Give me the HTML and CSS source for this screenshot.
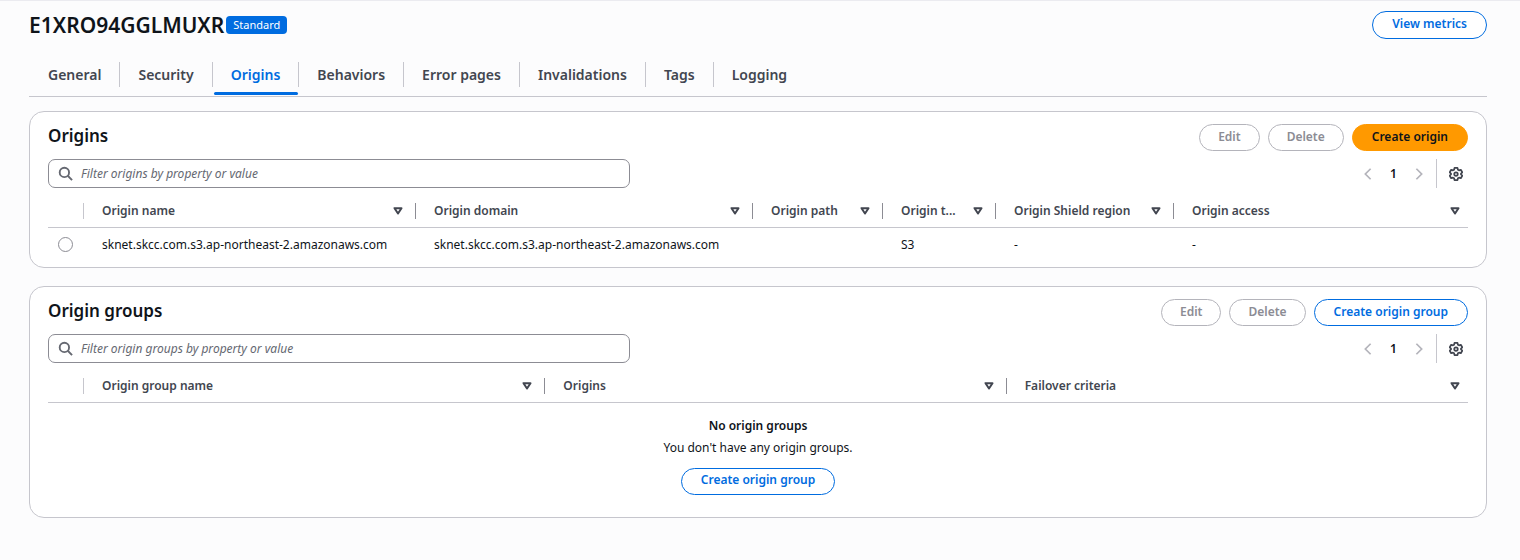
FILE: index.html
```html
<!DOCTYPE html>
<html lang="en">
<head>
<meta charset="utf-8">
<meta name="viewport" content="width=device-width, initial-scale=1">
<title>E1XRO94GGLMUXR</title>
<link rel="stylesheet" href="styles.css">
</head>
<body>
<svg class="sprite" aria-hidden="true">
  <symbol id="search" viewBox="0 0 16 16"><circle cx="6.8" cy="6.8" r="5"/><path d="M10.4 10.4 15 15"/></symbol>
  <symbol id="prev" viewBox="0 0 16 16"><path d="M11 2 5 8l6 6"/></symbol>
  <symbol id="next" viewBox="0 0 16 16"><path d="m5 2 6 6-6 6"/></symbol>
  <symbol id="gear" viewBox="0 0 16 16"><path d="M6.300 1h3.400l.5 2.100 1.200.7 2.100-.6 1.700 2.900L13.700 7.500v1l1.500 1.400-1.700 2.900-2.100-.6-1.200.7-.5 2.100H6.300l-.5-2.100-1.200-.7-2.100.6L.8 9.900l1.500-1.400v-1L.8 6.100l1.700-2.900 2.100.6 1.200-.7z"/><circle cx="8" cy="8" r="2"/></symbol>
  <symbol id="sort" viewBox="0 0 10 8"><path d="M1.500 1.200h7L5 6.500z"/></symbol>
</svg>

<main class="page">
  <header class="page-header">
    <h1>E1XRO94GGLMUXR</h1>
    <span class="badge">Standard</span>
    <button class="btn page-action" type="button">View metrics</button>
  </header>

  <nav class="tabs">
    <a href="#general">General</a>
    <a href="#security">Security</a>
    <a href="#origins" class="active" aria-current="page">Origins</a>
    <a href="#behaviors">Behaviors</a>
    <a href="#errors">Error pages</a>
    <a href="#invalidations">Invalidations</a>
    <a href="#tags">Tags</a>
    <a href="#logging">Logging</a>
  </nav>

  <section class="card">
    <div class="card-header">
      <h2>Origins</h2>
      <div class="actions">
        <button class="btn" type="button" disabled>Edit</button>
        <button class="btn" type="button" disabled>Delete</button>
        <button class="btn primary" type="button">Create origin</button>
      </div>
    </div>
    <div class="tools">
      <label class="filter">
        <svg class="icon"><use href="#search"/></svg>
        <input type="text" aria-label="Filter origins" placeholder="Filter origins by property or value">
      </label>
      <div class="pager">
        <button class="icon-btn" type="button" aria-label="Previous page" disabled><svg class="icon"><use href="#prev"/></svg></button>
        <button class="page-number" type="button">1</button>
        <button class="icon-btn" type="button" aria-label="Next page" disabled><svg class="icon"><use href="#next"/></svg></button>
        <span class="divider"></span>
        <button class="icon-btn" type="button" aria-label="Preferences"><svg class="icon gear"><use href="#gear"/></svg></button>
      </div>
    </div>
    <table>
      <colgroup><col class="c-select"><col class="c-name"><col class="c-domain"><col class="c-path"><col class="c-type"><col class="c-shield"><col></colgroup>
      <thead>
        <tr>
          <th class="select"></th>
          <th><button class="sort" type="button"><span>Origin name</span><svg><use href="#sort"/></svg></button></th>
          <th><button class="sort" type="button"><span>Origin domain</span><svg><use href="#sort"/></svg></button></th>
          <th><button class="sort" type="button"><span>Origin path</span><svg><use href="#sort"/></svg></button></th>
          <th><button class="sort" type="button"><span>Origin t...</span><svg><use href="#sort"/></svg></button></th>
          <th><button class="sort" type="button"><span>Origin Shield region</span><svg><use href="#sort"/></svg></button></th>
          <th><button class="sort" type="button"><span>Origin access</span><svg><use href="#sort"/></svg></button></th>
        </tr>
      </thead>
      <tbody>
        <tr>
          <td class="select"><input type="radio" name="origin" aria-label="Select origin"></td>
          <td>sknet.skcc.com.s3.ap-northeast-2.amazonaws.com</td>
          <td>sknet.skcc.com.s3.ap-northeast-2.amazonaws.com</td>
          <td></td>
          <td>S3</td>
          <td>-</td>
          <td>-</td>
        </tr>
      </tbody>
    </table>
  </section>

  <section class="card">
    <div class="card-header">
      <h2>Origin groups</h2>
      <div class="actions">
        <button class="btn" type="button" disabled>Edit</button>
        <button class="btn" type="button" disabled>Delete</button>
        <button class="btn" type="button">Create origin group</button>
      </div>
    </div>
    <div class="tools">
      <label class="filter">
        <svg class="icon"><use href="#search"/></svg>
        <input type="text" aria-label="Filter origin groups" placeholder="Filter origin groups by property or value">
      </label>
      <div class="pager">
        <button class="icon-btn" type="button" aria-label="Previous page" disabled><svg class="icon"><use href="#prev"/></svg></button>
        <button class="page-number" type="button">1</button>
        <button class="icon-btn" type="button" aria-label="Next page" disabled><svg class="icon"><use href="#next"/></svg></button>
        <span class="divider"></span>
        <button class="icon-btn" type="button" aria-label="Preferences"><svg class="icon gear"><use href="#gear"/></svg></button>
      </div>
    </div>
    <table>
      <colgroup><col class="c-select"><col><col><col></colgroup>
      <thead>
        <tr>
          <th class="select"></th>
          <th><button class="sort" type="button"><span>Origin group name</span><svg><use href="#sort"/></svg></button></th>
          <th><button class="sort" type="button"><span>Origins</span><svg><use href="#sort"/></svg></button></th>
          <th><button class="sort" type="button"><span>Failover criteria</span><svg><use href="#sort"/></svg></button></th>
        </tr>
      </thead>
    </table>
    <div class="empty">
      <strong>No origin groups</strong>
      <p>You don't have any origin groups.</p>
      <button class="btn" type="button">Create origin group</button>
    </div>
  </section>
</main>
</body>
</html>
```

FILE: styles.css
```css
* { box-sizing: border-box; }

body {
  margin: 0;
  background: #fcfcfd;
  color: #0f141a;
  font: 12px/20px "Noto Sans", "Open Sans", sans-serif;
}

button, input { font: inherit; color: inherit; }
button { margin: 0; padding: 0; border: 0; background: none; }
h1, h2, p { margin: 0; }
.sprite { display: none; }

.page {
  border-top: 1px solid #ebebf0;
  padding: 10px 33px 42px 29px;
}

.page-header { display: flex; align-items: center; gap: 2px; }
h1 { font-size: 21px; line-height: 28px; font-weight: 600; }

.badge {
  padding: 0 7px;
  border-radius: 4px;
  background: #006ce0;
  color: #fff;
  font-size: 11px;
  line-height: 18px;
}

.btn {
  height: 27px;
  padding: 0 19px 2px;
  border: 1px solid #006ce0;
  border-radius: 14px;
  background: #fff;
  color: #006ce0;
  font-weight: 600;
  white-space: nowrap;
}
.btn:disabled { padding: 0 18px 2px; border-color: #b4b4bb; color: #8c8c94; }
.btn.primary { border-color: #ff9900; background: #ff9900; color: #0f141a; }
.page-action { height: 28px; margin-left: auto; }

.tabs {
  display: flex;
  margin-top: 12px;
  padding: 11px 0 0 1px;
  border-bottom: 1px solid #c6c6cd;
}
.tabs a {
  position: relative;
  margin-bottom: 9px;
  padding: 0 18px;
  border-right: 1px solid #c6c6cd;
  color: #424650;
  font-size: 14px;
  font-weight: 600;
  line-height: 25px;
  text-decoration: none;
}
.tabs a:last-child { border-right: 0; }
.tabs .active { color: #006ce0; }
.tabs .active::after {
  content: "";
  position: absolute;
  right: 0;
  bottom: -8px;
  left: 1px;
  height: 3px;
  border-radius: 2px;
  background: #006ce0;
}

.card {
  margin-top: 14px;
  padding: 12px 18px 5px;
  border: 1px solid #c6c6cd;
  border-radius: 15px;
  background: #fff;
}
.card + .card { margin-top: 18px; padding-bottom: 22px; }

.card-header { display: flex; justify-content: space-between; }
h2 { font-size: 17px; line-height: 24px; font-weight: 600; }
.actions { display: flex; gap: 8px; }

.tools { display: flex; justify-content: space-between; margin-top: 8px; }
.filter {
  display: flex;
  align-items: center;
  gap: 8px;
  width: 41%;
  height: 29px;
  padding: 0 10px 0 9px;
  border: 1px solid #8c8c94;
  border-radius: 7px;
}
.filter input {
  flex: 1;
  min-width: 0;
  padding: 0;
  border: 0;
  outline: 0;
  background: none;
}
.filter input::placeholder { color: #656871; font-style: italic; opacity: 1; }

.icon {
  display: block;
  width: 15px;
  height: 15px;
  fill: none;
  stroke: #656871;
  stroke-width: 2;
}
.pager { display: flex; align-items: center; }
.pager .icon { width: 14px; height: 14px; }
.icon-btn:disabled .icon { stroke: #b4b4bb; }
.icon.gear { stroke: #424650; stroke-linejoin: round; }
.page-number { width: 37px; font-weight: 600; }
.divider { align-self: stretch; width: 1px; margin: 0 12px 0 10px; background: #c6c6cd; }
.pager .icon-btn:last-child { padding-right: 5px; }

table { width: 100%; table-layout: fixed; border-collapse: collapse; }
.c-select { width: 36px; }
.c-name { width: 332px; }
.c-domain { width: 337px; }
.c-path { width: 130px; }
.c-type { width: 113px; }
.c-shield { width: 178px; }

th {
  height: 39px;
  padding: 7px 0 0;
  border-bottom: 1px solid #c6c6cd;
  color: #424650;
  text-align: left;
  font-weight: 600;
}
.sort {
  display: flex;
  align-items: center;
  justify-content: space-between;
  gap: 8px;
  width: 100%;
  height: 16px;
  padding: 0 12px 0 18px;
  border-right: 1px solid #8c8c94;
  font-weight: 600;
}
th:last-child .sort { padding-right: 8px; border-right: 0; }
.sort span { overflow: hidden; text-overflow: ellipsis; white-space: nowrap; line-height: 20px; }
.sort svg {
  flex: none;
  width: 10px;
  height: 8px;
  fill: none;
  stroke: #424650;
  stroke-width: 2;
  stroke-linejoin: round;
}
th.select::after { content: ""; display: block; height: 16px; border-right: 1px solid #c6c6cd; }

td { height: 35px; padding: 0 0 0 18px; white-space: nowrap; }
td.select { padding: 0 0 0 10px; }
td input {
  appearance: none;
  display: block;
  width: 15px;
  height: 15px;
  margin: 0;
  border: 1px solid #8c8c94;
  border-radius: 50%;
  background: #fff;
}

.empty { display: flex; flex-direction: column; align-items: center; padding-top: 13px; }
.empty strong { font-weight: 600; }
.empty p { margin: 2px 0 10px; }
```
